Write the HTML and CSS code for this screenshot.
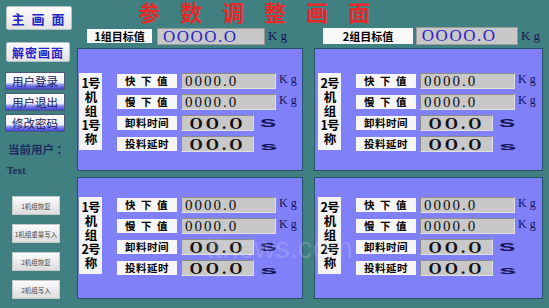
FILE: index.html
```html
<!DOCTYPE html>
<html>
<head>
    <title>参数调整画面</title>
    <link rel="stylesheet" href="styles.css">
</head>
<body>
    <div class="screen">
        <aside class="side">
            <button class="main-btn">主 画 面</button>
            <button class="crypt-btn">解密画面</button>

            <div class="user-btns">
                <button class="user-btn">用户登录</button>
                <button class="user-btn">用户退出</button>
                <button class="user-btn">修改密码</button>
            </div>

            <div class="cur-user">当前用户 ：</div>
            <div class="user-text">Text</div>

            <div class="act-btns">
                <button class="act-btn">1机组恢复</button>
                <button class="act-btn">1机组重量写入</button>
                <button class="act-btn">2机组恢复</button>
                <button class="act-btn">2机组写入</button>
            </div>
        </aside>

        <main class="main">
            <h1 class="title">参数调整画面</h1>

            <div class="board">
                <div class="target target-1">
                    <span class="target-label">1组目标值</span>
                    <span class="target-value">OOOO.O</span>
                    <span class="unit-kg">Kg</span>
                </div>
                <div class="target target-2">
                    <span class="target-label">2组目标值</span>
                    <span class="target-value">OOOO.O</span>
                    <span class="unit-kg">Kg</span>
                </div>

                <section class="panel panel-top">
                    <div class="scale-name">1号<br>机<br>组<br>1号<br>称</div>
                    <div class="rows">
                        <div class="row"><span class="label spaced">快 下 值</span><span class="val">0000.0</span><span class="unit-kg">Kg</span></div>
                        <div class="row"><span class="label spaced">慢 下 值</span><span class="val">0000.0</span><span class="unit-kg">Kg</span></div>
                        <div class="row"><span class="label">卸料时间</span><span class="val val-time">OO.O</span><span class="unit-s">S</span></div>
                        <div class="row"><span class="label">投料延时</span><span class="val val-time">OO.O</span><span class="unit-s small">s</span></div>
                    </div>
                </section>

                <section class="panel panel-top panel-right">
                    <div class="scale-name">2号<br>机<br>组<br>1号<br>称</div>
                    <div class="rows">
                        <div class="row"><span class="label spaced">快 下 值</span><span class="val">0000.0</span><span class="unit-kg">Kg</span></div>
                        <div class="row"><span class="label spaced">慢 下 值</span><span class="val">0000.0</span><span class="unit-kg">Kg</span></div>
                        <div class="row"><span class="label">卸料时间</span><span class="val val-time">OO.O</span><span class="unit-s">S</span></div>
                        <div class="row"><span class="label">投料延时</span><span class="val val-time">OO.O</span><span class="unit-s small">s</span></div>
                    </div>
                </section>

                <section class="panel panel-low">
                    <div class="scale-name">1号<br>机<br>组<br>2号<br>称</div>
                    <div class="rows">
                        <div class="row"><span class="label spaced">快 下 值</span><span class="val">0000.0</span><span class="unit-kg">Kg</span></div>
                        <div class="row"><span class="label spaced">慢 下 值</span><span class="val">0000.0</span><span class="unit-kg">Kg</span></div>
                        <div class="row"><span class="label">卸料时间</span><span class="val val-time">OO.O</span><span class="unit-s">S</span></div>
                        <div class="row"><span class="label">投料延时</span><span class="val val-time">OO.O</span><span class="unit-s small">s</span></div>
                    </div>
                </section>

                <section class="panel panel-low panel-right">
                    <div class="scale-name">2号<br>机<br>组<br>2号<br>称</div>
                    <div class="rows">
                        <div class="row"><span class="label spaced">快 下 值</span><span class="val">0000.0</span><span class="unit-kg">Kg</span></div>
                        <div class="row"><span class="label spaced">慢 下 值</span><span class="val">0000.0</span><span class="unit-kg">Kg</span></div>
                        <div class="row"><span class="label">卸料时间</span><span class="val val-time">OO.O</span><span class="unit-s">S</span></div>
                        <div class="row"><span class="label">投料延时</span><span class="val val-time">OO.O</span><span class="unit-s small">s</span></div>
                    </div>
                </section>
            </div>
        </main>

        <div class="watermark">ttnews.com</div>
    </div>
</body>
</html>
```

FILE: styles.css
```css
body {
    margin: 0;
    background-color: #408080;
    font-family: "Noto Sans CJK SC", "Liberation Sans", sans-serif;
}

.screen {
    position: relative;
    display: flex;
    width: 549px;
    height: 308px;
    overflow: hidden;
}

/* left column */

.side {
    width: 77px;
    flex-shrink: 0;
    box-sizing: border-box;
    padding-left: 6px;
    display: flex;
    flex-direction: column;
    align-items: flex-start;
}

.side button {
    font-family: "Noto Sans CJK SC", sans-serif;
    padding: 0;
    cursor: pointer;
    white-space: nowrap;
}

.main-btn {
    margin-top: 6px;
    width: 66px;
    height: 24px;
    background: linear-gradient(#fdfdfd, #e4e4e4);
    border: 1px solid #b8c4c4;
    border-radius: 2px;
    color: #2323c8;
    font-weight: bold;
    font-size: 13px;
    letter-spacing: 2px;
}

.crypt-btn {
    margin-top: 12px;
    width: 64px;
    height: 20px;
    background: linear-gradient(#fdfdfd, #e2e2e2);
    border: 1px solid #b8c4c4;
    border-radius: 2px;
    color: #2323c8;
    font-weight: bold;
    font-size: 12px;
    letter-spacing: 1px;
}

.user-btns {
    margin-top: 10px;
    margin-left: -1px;
    display: flex;
    flex-direction: column;
    gap: 3px;
}

.user-btn {
    width: 60px;
    height: 18px;
    background-color: #f4f4fc;
    background-image: linear-gradient(to bottom, #ffffff 0%, #f0f0fa 60%, #8c8cec 74%, #4040d8 100%);
    border: 1px solid #4a5a78;
    color: #1a2058;
    font-size: 11.5px;
    line-height: 14px;
}

.cur-user {
    margin-top: 10px;
    margin-left: 2px;
    font-size: 11.5px;
    font-weight: bold;
    color: #1e2c64;
    line-height: 14px;
}

.user-text {
    margin-top: 9px;
    margin-left: 1px;
    font-family: "Liberation Serif", serif;
    font-size: 10px;
    font-weight: bold;
    color: #1e2c50;
}

.act-btns {
    margin-top: 20px;
    margin-left: 6px;
    display: flex;
    flex-direction: column;
    gap: 9px;
}

.act-btn {
    width: 48px;
    height: 19px;
    background: linear-gradient(#fcfcfc, #dcdcdc);
    border: 1px solid #c4c8c8;
    color: #4a4a4a;
    font-size: 6.5px;
}

/* main area */

.main {
    flex: 1;
    display: flex;
    flex-direction: column;
}

.title {
    margin: 0 0 0 61px;
    height: 27px;
    font-size: 22px;
    line-height: 23px;
    font-weight: bold;
    letter-spacing: 20px;
    color: #e42a2a;
    white-space: nowrap;
}

.board {
    display: grid;
    grid-template-columns: 226px 229px;
    grid-template-rows: 18px 123px 125px;
    column-gap: 11px;
    row-gap: 3px;
}

.target {
    display: flex;
    align-items: center;
    white-space: nowrap;
}

.target-1 {
    padding-left: 10px;
}

.target-2 {
    padding-left: 9px;
}

.target-label {
    background-color: #f8f8f8;
    color: #000;
    font-weight: bold;
    font-size: 11px;
    text-align: center;
    height: 14px;
    line-height: 14px;
}

.target-1 .target-label {
    width: 65px;
}

.target-2 .target-label {
    width: 99px;
    height: 16px;
    line-height: 16px;
}

.target-value {
    box-sizing: border-box;
    height: 17px;
    background-color: #c8c8c8;
    border: 1px solid #9a9a9a;
    color: #2a22c8;
    font-family: "Liberation Serif", serif;
    font-size: 17px;
    line-height: 15px;
    letter-spacing: 1.5px;
    padding-left: 5px;
}

.target-1 .target-value {
    width: 108px;
    margin-left: 5px;
}

.target-2 .target-value {
    width: 112px;
    height: 18px;
    margin-left: 3px;
}

.target .unit-kg {
    margin-left: 3px;
    font-size: 13px;
}

/* panels */

.panel {
    box-sizing: border-box;
    border: 1px solid #27506a;
    background-color: #8080f8;
    display: flex;
    align-items: flex-start;
    padding-left: 1px;
}

.panel-right {
    padding-left: 3px;
}

.panel-top {
    padding-top: 24px;
}

.panel-low {
    margin-top: 3px;
    padding-top: 19px;
}

.scale-name {
    width: 23px;
    height: 77px;
    box-sizing: border-box;
    padding-top: 3px;
    background-color: #f4f4f4;
    color: #000;
    font-weight: bold;
    font-size: 12.5px;
    line-height: 14px;
    text-align: center;
    letter-spacing: -1px;
}

.rows {
    margin-left: 15px;
    display: flex;
    flex-direction: column;
    gap: 5px;
}

.row {
    display: flex;
    align-items: center;
    height: 16px;
    white-space: nowrap;
}

.label {
    width: 60px;
    height: 14px;
    line-height: 14px;
    background-color: #f6f6f6;
    color: #000;
    font-weight: bold;
    font-size: 10.5px;
    text-align: center;
    letter-spacing: 0.5px;
}

.label.spaced {
    letter-spacing: 1.5px;
}

.val {
    box-sizing: border-box;
    margin-left: 4px;
    width: 95px;
    height: 16px;
    background-color: #c8c8c8;
    border: 1px solid #8c8c8c;
    border-right-color: #e0e0e0;
    border-bottom-color: #e0e0e0;
    color: #111;
    font-family: "Liberation Serif", serif;
    font-size: 15px;
    line-height: 15px;
    letter-spacing: 2px;
    padding-left: 3px;
}

.val-time {
    width: 73px;
    padding-left: 0;
    text-align: center;
    font-weight: bold;
    font-size: 17px;
    letter-spacing: 3px;
}

.unit-kg {
    margin-left: 3px;
    font-family: "Liberation Serif", serif;
    font-size: 12px;
    letter-spacing: 3px;
    color: #14145a;
}

.row .unit-kg {
    margin-top: -3px;
}

.unit-s {
    margin-left: 6px;
    display: inline-block;
    transform: scaleX(2.3);
    transform-origin: left center;
    font-family: "Liberation Sans", sans-serif;
    font-size: 10.5px;
    font-weight: bold;
    color: #14145a;
}

.unit-s.small {
    margin-top: 4px;
    transform: scaleX(3);
}

.watermark {
    position: absolute;
    left: 206px;
    top: 232px;
    font-family: "Liberation Sans", sans-serif;
    font-size: 29px;
    color: rgba(220, 220, 255, 0.22);
    pointer-events: none;
}
```
